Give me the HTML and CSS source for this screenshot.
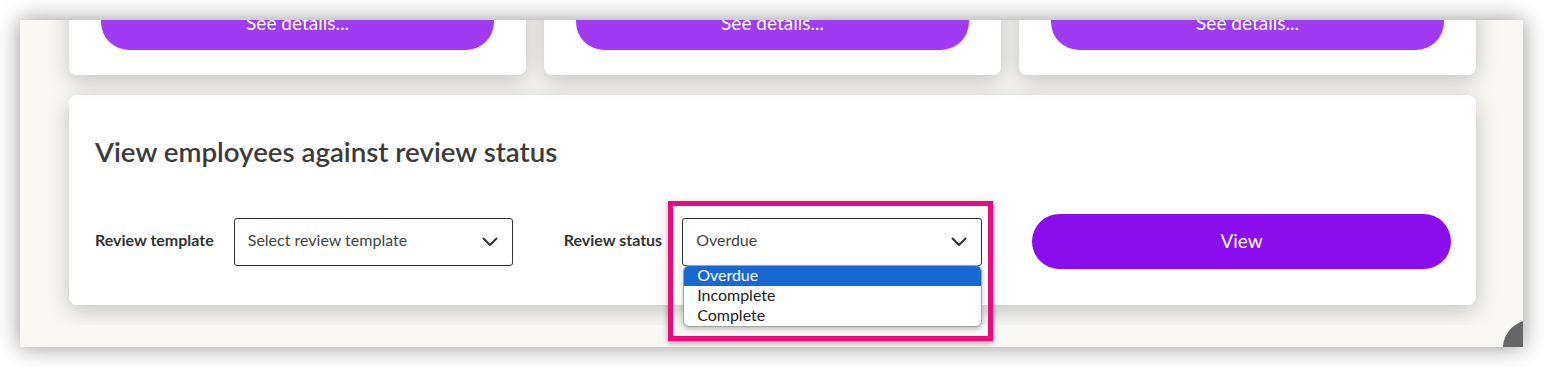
FILE: index.html
```html
<!DOCTYPE html>
<html lang="en">
<head>
    <meta charset="UTF-8">
    <meta name="viewport" content="width=device-width, initial-scale=1.0">
    <title>Review status</title>
    <link rel="stylesheet" href="styles.css">
</head>
<body>
    <div class="shot">
        <div class="page">
            <div class="cards">
                <div class="card small">
                    <button class="btn-details">See details...</button>
                </div>
                <div class="card small">
                    <button class="btn-details">See details...</button>
                </div>
                <div class="card small">
                    <button class="btn-details">See details...</button>
                </div>
            </div>

            <div class="card review">
                <h2>View employees against review status</h2>
                <div class="filters">
                    <label class="field-label">Review template</label>
                    <div class="select select-template">
                        <span>Select review template</span>
                        <svg class="chevron" width="16" height="10" viewBox="0 0 16 10"><path d="M1.5 1.5l6.5 6.5 6.5-6.5" fill="none" stroke="#333" stroke-width="2" stroke-linecap="round" stroke-linejoin="round"/></svg>
                    </div>
                    <label class="field-label gap-left">Review status</label>
                    <div class="select select-status">
                        <span>Overdue</span>
                        <svg class="chevron" width="16" height="10" viewBox="0 0 16 10"><path d="M1.5 1.5l6.5 6.5 6.5-6.5" fill="none" stroke="#333" stroke-width="2" stroke-linecap="round" stroke-linejoin="round"/></svg>
                        <ul class="options">
                            <li class="active">Overdue</li>
                            <li>Incomplete</li>
                            <li>Complete</li>
                        </ul>
                    </div>
                    <button class="btn-view">View</button>
                </div>
            </div>
        </div>
        <div class="strip"></div>

        <!-- annotation and floating help button -->
        <div class="highlight"></div>
        <div class="help"></div>
    </div>
</body>
</html>
```

FILE: styles.css
```css
body { margin: 0; padding: 20px; background: #fff; font-family: Lato, "Open Sans", Arial, sans-serif; }
.shot { position: relative; width: 1503px; height: 327px; overflow: hidden; background: #f9f8f5; box-shadow: 0 0 22px rgba(0,0,0,0.42); }
.page { display: flow-root; height: 305px; padding: 0 47px 0 49px; }
.strip { position: relative; z-index: 1; height: 22px; background: #f9f8f5; }

.cards { display: grid; grid-template-columns: repeat(3, 1fr); gap: 18px; margin-top: -50px; }
.card { background: #fff; border-radius: 8px; box-shadow: 0 6px 22px rgba(0,0,0,0.22); }
.card.small { padding: 24px 32px 25px; }
.btn-details { display: block; width: 100%; height: 56px; border: none; border-radius: 28px; background: #a03af3; color: #fff; font-family: inherit; font-size: 19px; padding: 0; }

.review { margin-top: 20px; height: 210px; box-sizing: border-box; padding: 41px 25px 36px 26px; }
.review h2 { margin: 0; font-size: 27.7px; line-height: 32px; font-weight: 600; color: #3b3b3b; }

.filters { display: flex; align-items: center; margin-top: 46px; }
.field-label { font-size: 16px; font-weight: 700; color: #333; margin-right: 20px; padding-bottom: 4px; }
.gap-left { margin-left: 51px; }

.select { position: relative; height: 48px; box-sizing: border-box; border: 1px solid #333; border-radius: 3px; display: flex; align-items: center; justify-content: space-between; padding: 0 14px 4px 13px; font-size: 16px; color: #444; }
.select-template { width: 279px; }
.select-status { width: 300px; }
.chevron { display: block; margin-top: 4px; }

.options { position: absolute; z-index: 2; top: 46px; left: 0; width: 297px; margin: 0; padding: 0; list-style: none; background: #fff; border: 1px solid #a5a5a5; border-radius: 6px; overflow: hidden; box-shadow: 0 2px 4px rgba(0,0,0,0.25); }
.options li { height: 20px; line-height: 17px; padding-left: 13px; font-size: 16px; color: #222; }
.options li.active { background: #1967d2; color: #fff; }

.btn-view { margin-left: 50px; width: 419px; height: 55px; border: none; border-radius: 28px; background: #8a0ded; color: #fff; font-family: inherit; font-size: 19px; padding: 0 0 3px; }

.highlight { position: absolute; z-index: 3; left: 648px; top: 181px; width: 325px; height: 140px; box-sizing: border-box; border: 5px solid #ec0a80; box-shadow: 0 2px 6px rgba(0,0,0,0.35); }
.help { position: absolute; z-index: 3; left: 1483px; top: 300px; width: 56px; height: 56px; border-radius: 50%; background: #666; }
```
